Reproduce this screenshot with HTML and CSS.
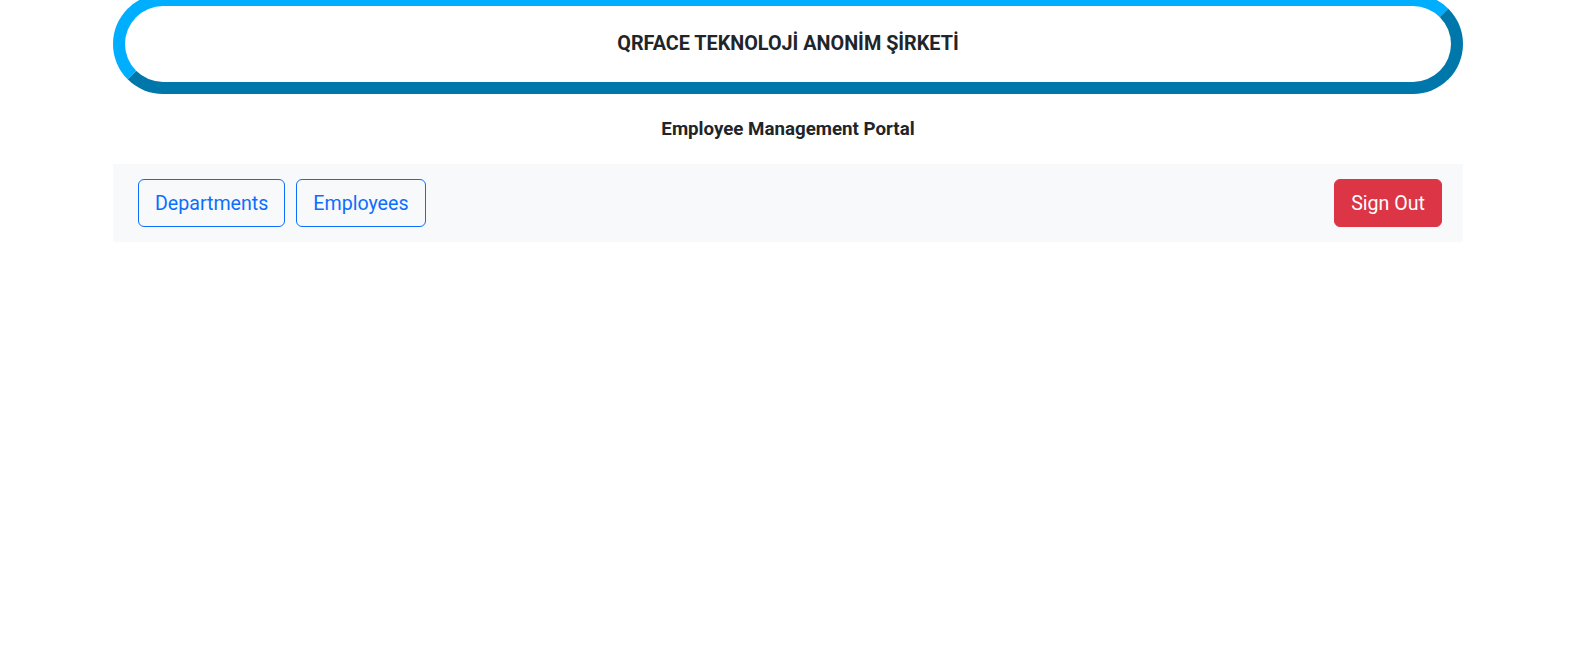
FILE: index.html
```html
<!DOCTYPE html>
<html>
<head>
<meta charset="utf-8">
<link rel="stylesheet" href="styles.css">
</head>
<body>
<div class="page">
  <header class="brand">
    <h1 class="brand-title">QRFACE TEKNOLOJİ ANONİM ŞİRKETİ</h1>
  </header>
  <h2 class="subtitle">Employee Management Portal</h2>
  <nav class="navbar">
    <div class="nav-left">
      <button class="btn btn-outline">Departments</button>
      <button class="btn btn-outline">Employees</button>
    </div>
    <button class="btn btn-danger">Sign Out</button>
  </nav>
</div>
</body>
</html>
```
FILE: styles.css
```css
html, body {
  margin: 0;
  padding: 0;
  background: #ffffff;
  font-family: Roboto, "Liberation Sans", Arial, sans-serif;
  color: #212529;
}
.page {
  width: 1350px;
  margin-left: 113px;
}
.brand {
  margin-top: -6px;
  height: 76px;
  border: 12px solid;
  border-color: #00aeff #0077aa #0077aa #00aeff;
  border-radius: 50px;
  display: flex;
  align-items: center;
  justify-content: center;
}
.brand-title {
  margin: 0;
  font-size: 19.8px;
  font-weight: 700;
  line-height: 1.2;
}
.subtitle {
  margin: 24px 0 0;
  height: 46px;
  font-size: 18.72px;
  font-weight: 700;
  text-align: center;
  line-height: 22px;
}
.navbar {
  background: #f8f9fa;
  display: flex;
  align-items: center;
  justify-content: space-between;
  padding: 15px 21px 15px 25px;
}
.nav-left {
  display: flex;
  gap: 11px;
}
.btn {
  font-family: inherit;
  font-size: 19.6px;
  line-height: 30px;
  padding: 9px 16px 7px;
  border-radius: 6px;
  border: 1px solid transparent;
  cursor: pointer;
}
.btn-outline {
  background: transparent;
  color: #0d6efd;
  border-color: #0d6efd;
}
.btn-danger {
  background: #dc3545;
  color: #ffffff;
  border-color: #dc3545;
}
```
